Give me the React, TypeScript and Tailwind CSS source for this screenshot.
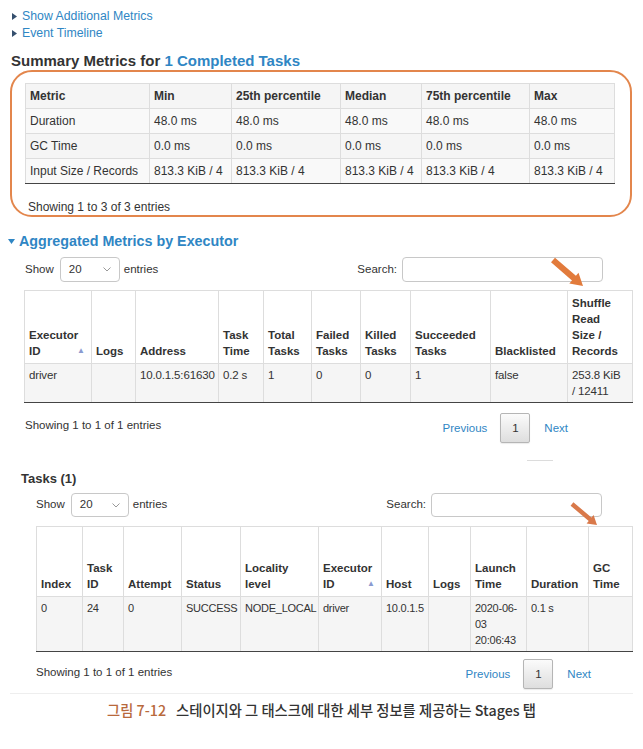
import React from "react";

const LINK = "text-[#2f86c4]";

function Chevron() {
  return (
    <svg width="8" height="5" viewBox="0 0 8 5" className="block">
      <path d="M0.5 0.5 L4 4 L7.5 0.5" fill="none" stroke="#999" strokeWidth="1" />
    </svg>
  );
}

function SelectBox({ w, h }: { w: string; h: string }) {
  return (
    <div className={`flex items-center justify-between rounded-[4px] border border-[#c8c8c8] bg-white pl-[8px] pr-[8px] ${w} ${h}`}>
      <span>20</span>
      <Chevron />
    </div>
  );
}

function Pager() {
  return (
    <div className="flex items-center">
      <span className={`${LINK}`}>Previous</span>
      <div className="ml-[13px] flex h-[30px] w-[30px] items-center justify-center rounded-[2px] border border-[#b5b5b5] bg-linear-to-b from-[#fbfbfb] to-[#dedede] text-[#333] shadow-[0_1px_1px_rgba(0,0,0,0.08)]">
        1
      </div>
      <span className={`${LINK} ml-[14px]`}>Next</span>
    </div>
  );
}

const summaryCols = [124, 82, 109, 81, 108, 85];
const summaryHead = ["Metric", "Min", "25th percentile", "Median", "75th percentile", "Max"];
const summaryRows = [
  ["Duration", "48.0 ms", "48.0 ms", "48.0 ms", "48.0 ms", "48.0 ms"],
  ["GC Time", "0.0 ms", "0.0 ms", "0.0 ms", "0.0 ms", "0.0 ms"],
  ["Input Size / Records", "813.3 KiB / 4", "813.3 KiB / 4", "813.3 KiB / 4", "813.3 KiB / 4", "813.3 KiB / 4"],
];

const execCols = [67, 44, 83, 45, 48, 49, 50, 80, 77, 65];
const execHead: React.ReactNode[] = [
  <>Executor<br />ID</>,
  "Logs",
  "Address",
  <>Task<br />Time</>,
  <>Total<br />Tasks</>,
  <>Failed<br />Tasks</>,
  <>Killed<br />Tasks</>,
  <>Succeeded<br />Tasks</>,
  "Blacklisted",
  <>Shuffle<br />Read<br />Size /<br />Records</>,
];
const execRow: React.ReactNode[] = [
  "driver",
  "",
  "10.0.1.5:61630",
  "0.2 s",
  "1",
  "0",
  "0",
  "1",
  "false",
  <>253.8 KiB<br />/ 12411</>,
];

const taskCols = [46, 41, 58, 59, 78, 63, 47, 42, 56, 62, 44];
const taskHead: React.ReactNode[] = [
  "Index",
  <>Task<br />ID</>,
  "Attempt",
  "Status",
  <>Locality<br />level</>,
  <>Executor<br />ID</>,
  "Host",
  "Logs",
  <>Launch<br />Time</>,
  "Duration",
  <>GC<br />Time</>,
];
const taskRow: React.ReactNode[] = [
  "0",
  "24",
  "0",
  "SUCCESS",
  "NODE_LOCAL",
  "driver",
  "10.0.1.5",
  "",
  <>2020-06-<br />03<br />20:06:43</>,
  "0.1 s",
  "",
];

function SortUp() {
  return (
    <span className="absolute bottom-[8px] right-[6px] text-[8px] leading-[8px] text-[#8a9bd0]">▲</span>
  );
}

export default function App() {
  return (
    <div className="relative h-[749px] w-[643px] overflow-hidden bg-white font-['Liberation_Sans',Helvetica,Arial,sans-serif] text-[#333]">
      {/* top links */}
      <div className={`pl-[12px] pt-[8px] text-[12.3px] leading-[17px] ${LINK}`}>
        <div className="flex items-center">
          <svg width="5" height="7" viewBox="0 0 5 7" className="mr-[5px]">
            <path d="M0 0 L5 3.5 L0 7 Z" fill="#35506e" />
          </svg>
          <span>Show Additional Metrics</span>
        </div>
        <div className="flex items-center">
          <svg width="5" height="7" viewBox="0 0 5 7" className="mr-[5px]">
            <path d="M0 0 L5 3.5 L0 7 Z" fill="#35506e" />
          </svg>
          <span>Event Timeline</span>
        </div>
      </div>

      <div className="mt-[10px] pl-[11px] text-[15px] font-bold leading-[18px]">
        Summary Metrics for <span className={LINK}>1 Completed Tasks</span>
      </div>

      {/* orange highlighted box */}
      <div className="mx-[10px] w-[622px] rounded-[22px] border-2 border-[#e3864c] pl-[13px] pt-[11px]">
        <table className="w-[589px] table-fixed border-collapse text-[12px] leading-[16px]">
          <colgroup>
            {summaryCols.map((w, i) => (
              <col key={i} style={{ width: w }} />
            ))}
          </colgroup>
          <thead>
            <tr className="bg-[#f5f5f5]">
              {summaryHead.map((h, i) => (
                <th key={i} className="border border-[#dddddd] px-[4px] py-[4px] text-left font-bold">
                  {h}
                </th>
              ))}
            </tr>
          </thead>
          <tbody>
            {summaryRows.map((r, ri) => (
              <tr key={ri} className={ri % 2 === 0 ? "bg-[#f9f9f9]" : "bg-[#f5f5f5]"}>
                {r.map((c, ci) => (
                  <td
                    key={ci}
                    className={`whitespace-nowrap border border-[#dddddd] px-[4px] py-[4px] ${ri === summaryRows.length - 1 ? "border-b-[#444]" : ""}`}
                  >
                    {c}
                  </td>
                ))}
              </tr>
            ))}
          </tbody>
        </table>
        <div className="mt-[15px] pl-[3px] text-[12px] leading-[16px]">Showing 1 to 3 of 3 entries</div>
      </div>

      {/* Aggregated metrics */}
      <div className={`mt-[15px] flex items-center pl-[8px] text-[14.3px] font-bold leading-[18px] ${LINK}`}>
        <svg width="7" height="5" viewBox="0 0 7 5" className="mr-[4px]">
          <path d="M0 0 L7 0 L3.5 5 Z" fill="#2f86c4" />
        </svg>
        Aggregated Metrics by Executor
      </div>

      <div className="mt-[7px] flex items-center text-[11.5px]">
        <div className="flex items-center pl-[25px]">
          <span>Show</span>
          <div className="ml-[6px]">
            <SelectBox w="w-[60px]" h="h-[25px]" />
          </div>
          <span className="ml-[4px]">entries</span>
        </div>
        <div className="ml-auto mr-[40px] flex items-center">
          <span>Search:</span>
          <div className="ml-[5px] h-[25px] w-[201px] rounded-[4px] border border-[#c8c8c8] bg-white" />
        </div>
      </div>

      <div className="mt-[8px] pl-[24px]">
        <table className="w-[608px] table-fixed border-collapse text-[11.5px] leading-[16px]">
          <colgroup>
            {execCols.map((w, i) => (
              <col key={i} style={{ width: w }} />
            ))}
          </colgroup>
          <thead>
            <tr className="bg-white">
              {execHead.map((h, i) => (
                <th
                  key={i}
                  className="relative border border-[#dddddd] px-[4px] pb-[4px] pt-[4px] text-left align-bottom font-bold"
                >
                  {h}
                  {i === 0 && <SortUp />}
                </th>
              ))}
            </tr>
          </thead>
          <tbody>
            <tr className="bg-[#f5f5f5]">
              {execRow.map((c, i) => (
                <td key={i} className="whitespace-nowrap border border-[#dddddd] border-b-[#444] px-[4px] py-[3px] align-top tracking-[-0.15px]">
                  {c}
                </td>
              ))}
            </tr>
          </tbody>
        </table>
      </div>

      <div className="mt-[10px] flex items-start text-[11.5px] leading-[16px]">
        <div className="mt-[4px] pl-[25px]">Showing 1 to 1 of 1 entries</div>
        <div className="ml-auto mr-[75px]">
          <Pager />
        </div>
      </div>

      <div className="ml-[527px] mt-[17px] h-px w-[26px] bg-[#dcdcdc]" />

      {/* Tasks */}
      <div className="mt-[10px] pl-[21px] text-[13px] font-bold leading-[16px]">Tasks (1)</div>

      <div className="mt-[6px] flex items-center text-[11.5px]">
        <div className="flex items-center pl-[36px]">
          <span>Show</span>
          <div className="ml-[6px]">
            <SelectBox w="w-[58px]" h="h-[24px]" />
          </div>
          <span className="ml-[4px]">entries</span>
        </div>
        <div className="ml-auto mr-[41px] flex items-center">
          <span>Search:</span>
          <div className="ml-[5px] h-[24px] w-[171px] rounded-[4px] border border-[#c8c8c8] bg-white" />
        </div>
      </div>

      <div className="mt-[9px] pl-[36px]">
        <table className="w-[596px] table-fixed border-collapse text-[11.5px] leading-[16px]">
          <colgroup>
            {taskCols.map((w, i) => (
              <col key={i} style={{ width: w }} />
            ))}
          </colgroup>
          <thead>
            <tr className="bg-white">
              {taskHead.map((h, i) => (
                <th
                  key={i}
                  className="relative h-[70px] border border-[#dddddd] px-[4px] pb-[4px] pt-[4px] text-left align-bottom font-bold"
                >
                  {h}
                  {i === 5 && <SortUp />}
                </th>
              ))}
            </tr>
          </thead>
          <tbody>
            <tr className="bg-[#f5f5f5]">
              {taskRow.map((c, i) => (
                <td key={i} className="whitespace-nowrap border border-[#dddddd] border-b-[#444] px-[4px] py-[3px] align-top text-[11px] tracking-[-0.25px]">
                  {c}
                </td>
              ))}
            </tr>
          </tbody>
        </table>
      </div>

      <div className="mt-[7px] flex items-start text-[11.5px] leading-[16px]">
        <div className="mt-[5px] pl-[36px]">Showing 1 to 1 of 1 entries</div>
        <div className="ml-auto mr-[52px]">
          <Pager />
        </div>
      </div>

      <div className="mx-[10px] mt-[4px] h-px bg-[#eeeeee]" />

      <div className="mt-[6px] text-center font-['Noto_Sans_CJK_KR','Noto_Sans',sans-serif] text-[14.3px] font-medium leading-[20px] text-[#333]">
        <span className="text-[#b8693c]">그림 7-12</span>
        <span className="ml-[10px]">스테이지와 그 태스크에 대한 세부 정보를 제공하는 Stages 탭</span>
      </div>

      {/* orange arrows overlay */}
      <svg className="pointer-events-none absolute left-0 top-0" width="643" height="749">
        <polygon
          points="551.0,262.3 571.97,280.4 569.3,283.4 583,286 578.5,272.8 575.9,275.8 555.0,257.7"
          fill="#e27b3c"
        />
        <polygon
          points="570.6,505.7 588.7,520.9 586.6,523.4 597,525 593.6,515.0 591.5,517.5 573.4,502.3"
          fill="#d9794a"
        />
      </svg>
    </div>
  );
}
